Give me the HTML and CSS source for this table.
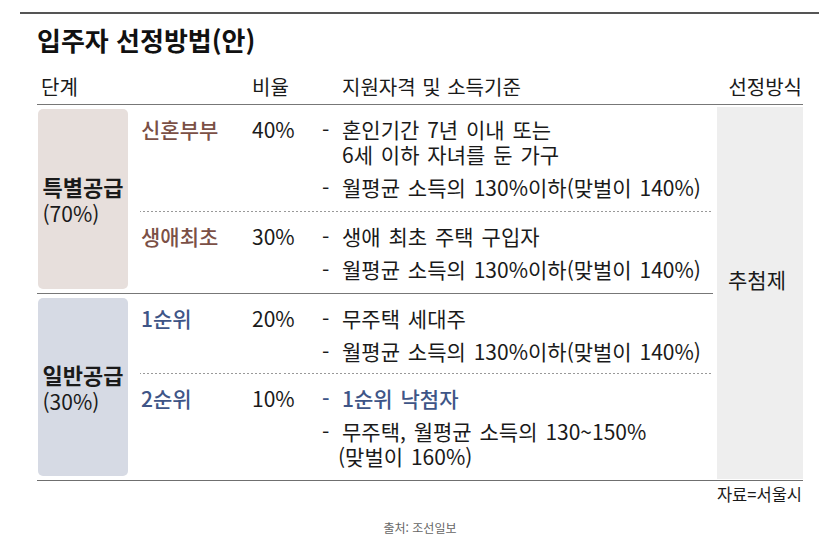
FILE: index.html
```html
<!DOCTYPE html>
<html lang="ko">
<head>
<meta charset="utf-8">
<link rel="stylesheet" href="styles.css">
</head>
<body>
<div class="page">
  <div class="toprule"></div>
  <h1 class="title">입주자 선정방법(안)</h1>
  <div class="table">
    <div class="thead">
      <div class="h-stage">단계</div>
      <div class="h-sub"></div>
      <div class="h-ratio">비율</div>
      <div class="h-cond">지원자격 및 소득기준</div>
      <div class="h-method">선정방식</div>
    </div>
    <div class="tbody">
      <div class="groups">
        <div class="group special">
          <div class="gbox"><div class="glabel"><strong>특별공급</strong><span>(70%)</span></div></div>
          <div class="rows">
            <div class="row">
              <div class="sub">신혼부부</div>
              <div class="ratio">40%</div>
              <ul class="items">
                <li><span class="dash">-</span><span>혼인기간 7년 이내 또는<br>6세 이하 자녀를 둔 가구</span></li>
                <li><span class="dash">-</span><span>월평균 소득의 130%이하(맞벌이 140%)</span></li>
              </ul>
            </div>
            <div class="row">
              <div class="sub">생애최초</div>
              <div class="ratio">30%</div>
              <ul class="items">
                <li><span class="dash">-</span><span>생애 최초 주택 구입자</span></li>
                <li><span class="dash">-</span><span>월평균 소득의 130%이하(맞벌이 140%)</span></li>
              </ul>
            </div>
          </div>
        </div>
        <div class="group general">
          <div class="gbox"><div class="glabel"><strong>일반공급</strong><span>(30%)</span></div></div>
          <div class="rows">
            <div class="row first">
              <div class="sub">1순위</div>
              <div class="ratio">20%</div>
              <ul class="items">
                <li><span class="dash">-</span><span>무주택 세대주</span></li>
                <li><span class="dash">-</span><span>월평균 소득의 130%이하(맞벌이 140%)</span></li>
              </ul>
            </div>
            <div class="row">
              <div class="sub">2순위</div>
              <div class="ratio">10%</div>
              <ul class="items">
                <li class="hl"><span class="dash">-</span><span>1순위 낙첨자</span></li>
                <li><span class="dash">-</span><span>무주택, 월평균 소득의 130~150%<br><span class="paren">(맞벌이 160%)</span></span></li>
              </ul>
            </div>
          </div>
        </div>
      </div>
      <div class="method">추첨제</div>
    </div>
  </div>
  <div class="source">자료=서울시</div>
  <div class="credit">출처: 조선일보</div>
</div>
</body>
</html>
```

FILE: styles.css
```css
* { box-sizing: border-box; margin: 0; padding: 0; }
body {
  margin: 0;
  background: #fff;
  font-family: "Noto Sans CJK KR", sans-serif;
  color: #1a1a1a;
}
.page { width: 827px; padding-top: 12px; }
.toprule { margin-left: 20px; width: 799px; border-top: 2px solid #555; }
.title {
  margin: 10px 0 0 37px;
  font-size: 26px;
  line-height: 32px;
  font-weight: 700;
  color: #111;
}
.table { margin: 18px 0 0 37px; width: 766px; }
.thead {
  display: flex;
  font-size: 20px;
  line-height: 26px;
  word-spacing: 1px;
  padding-bottom: 4px;
  border-bottom: 1px solid #777;
}
.h-stage { width: 103px; padding-left: 4px; }
.h-sub { width: 111px; }
.h-ratio { width: 71px; padding-left: 1px; }
.h-cond { flex: 1; padding-left: 20px; }
.h-method { width: 86px; text-align: right; padding-right: 1px; white-space: nowrap; }

.tbody {
  display: grid;
  grid-template-columns: 676px 86px;
  column-gap: 4px;
  border-bottom: 1px solid #6f6f6f;
}
.group { display: flex; }
.group + .group { border-top: 1px solid #777; }
.gbox {
  width: 90px;
  flex: none;
  margin: 4px 12px 4px 1px;
  border-radius: 5px;
  display: flex;
  align-items: center;
  justify-content: center;
}
.special .gbox { background: #e7dfdc; }
.general .gbox { background: #d6dae4; }
.glabel { display: flex; flex-direction: column; }
.glabel strong {
  font-size: 22px;
  line-height: 28px;
  font-weight: 700;
}
.glabel span { font-size: 21px; line-height: 26px; }
.rows { flex: 1; }
.row { display: flex; padding: 12px 0 11px; }
.row.first { padding-bottom: 9px; }
.row + .row {
  border-top: 1px solid #aaa;
  border-image: repeating-linear-gradient(90deg, #999 0 2px, transparent 2px 4px) 1;
}
.sub {
  width: 111px;
  padding-left: 1px;
  font-size: 21px;
  line-height: 25px;
  font-weight: 500;
}
.special .sub { color: #7b5046; }
.general .sub { color: #3e5587; }
.ratio { width: 71px; padding-left: 1px; font-size: 21px; line-height: 25px; }
.items {
  list-style: none;
  font-size: 21px;
  line-height: 25px;
  word-spacing: 2px;
  display: flex;
  flex-direction: column;
  gap: 8px;
}
.items li { display: flex; }
.dash { width: 20px; flex: none; }
.paren { margin-left: -4px; }
.items li.hl { color: #3e5587; font-weight: 500; }
.method {
  background: #eee;
  margin: 2px 0 1px;
  display: flex;
  align-items: center;
  justify-content: center;
  font-size: 21px;
  padding: 0 6px 28px 0;
}
.source {
  margin-left: 37px;
  width: 765px;
  text-align: right;
  font-size: 16.5px;
  line-height: 22px;
  margin-top: 2px;
}
.credit {
  margin: 14px 0 0 37px;
  width: 766px;
  text-align: center;
  font-size: 12px;
  line-height: 18px;
  color: #666;
}
```
